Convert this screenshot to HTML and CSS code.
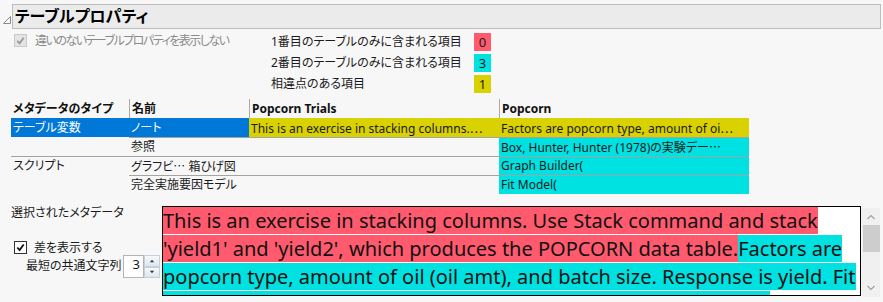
FILE: index.html
```html
<!DOCTYPE html>
<html>
<head>
    <title>テーブルプロパティ</title>
    <link rel="stylesheet" href="styles.css">
</head>
<body>
    <div class="outline">
        <svg class="disclosure" viewBox="0 0 10 10">
            <path d="M8.5 1.5 L8.5 8.5 L1.5 8.5 Z" fill="none" stroke="#8c8c8c" stroke-width="1"/>
        </svg>
        <div class="outline-title">テーブルプロパティ</div>
    </div>

    <div class="summary">
        <div class="check disabled">
            <span class="box">
                <svg viewBox="0 0 12 12"><path d="M2.5 6.5 L5 9 L9.5 3" fill="none" stroke="#9a9a9a" stroke-width="2"/></svg>
            </span>
            <span class="tight">違いのないテーブルプロパティを表示しない</span>
        </div>
        <div class="counts">
            <span>1番目のテーブルのみに含まれる項目</span><span class="badge red">0</span>
            <span>2番目のテーブルのみに含まれる項目</span><span class="badge cyan">3</span>
            <span>相違点のある項目</span><span class="badge yellow">1</span>
        </div>
    </div>

    <div class="meta-table">
        <div class="head">メタデータのタイプ</div>
        <div class="head sep">名前</div>
        <div class="head sep">Popcorn Trials</div>
        <div class="head sep">Popcorn</div>

        <div class="sel">テーブル変数</div>
        <div class="sel">ノート</div>
        <div class="yellow">This is an exercise in stacking columns.<span class="ell">…</span></div>
        <div class="yellow">Factors are popcorn type, amount of oi<span class="ell">…</span></div>

        <div></div>
        <div class="line">参照</div>
        <div class="line"></div>
        <div class="line cyan">Box, Hunter, Hunter (1978)の実験デー<span class="ell">…</span></div>

        <div class="line">スクリプト</div>
        <div class="line">グラフビ<span class="ell">…</span> 箱ひげ図</div>
        <div class="line"></div>
        <div class="line cyan">Graph Builder(</div>

        <div></div>
        <div class="line">完全実施要因モデル</div>
        <div class="line"></div>
        <div class="line cyan">Fit Model(</div>
    </div>

    <div class="detail">
        <div class="side">
            <div class="side-title">選択されたメタデータ</div>
            <div class="check diff-check">
                <span class="box on">
                    <svg viewBox="0 0 12 12"><path d="M2.5 6 L5 8.8 L9.5 2.8" fill="none" stroke="#111" stroke-width="2"/></svg>
                </span>
                差を表示する
            </div>
            <div class="common-row">
                <span class="common-label">最短の共通文字列</span>
                <span class="spin-value">3</span>
                <span class="spin-btns">
                    <span class="spin-btn">
                        <svg viewBox="0 0 7 4"><path d="M3.5 0.5 L6 3.5 L1 3.5 Z" fill="#333"/></svg>
                    </span>
                    <span class="spin-btn">
                        <svg viewBox="0 0 7 4"><path d="M1 0.5 L6 0.5 L3.5 3.5 Z" fill="#333"/></svg>
                    </span>
                </span>
            </div>
        </div>
        <div class="diff-box">
            <span class="hl-red">This is an exercise in stacking columns. Use Stack command and stack 'yield1' and 'yield2', which produces the POPCORN data table.</span><span class="hl-cyan">Factors are popcorn type, amount of oil (oil amt), and batch size. Response is yield. Fit Model is used to analyze the yield by popcorn, oil amt and batch.</span>
        </div>
        <div class="scrollbar">
            <svg class="arrow" viewBox="0 0 10 6"><path d="M1.5 5 L5 1.5 L8.5 5" fill="none" stroke="#a0a0a0" stroke-width="1.2"/></svg>
            <div class="thumb"></div>
            <div class="track"></div>
            <svg class="arrow" viewBox="0 0 10 6"><path d="M1.5 1 L5 4.5 L8.5 1" fill="none" stroke="#a0a0a0" stroke-width="1.2"/></svg>
        </div>
    </div>
</body>
</html>
```

FILE: styles.css
```css
body {
    margin: 0;
    background: #f7f7f7;
    font-family: "Noto Sans", "Noto Sans CJK JP", sans-serif;
    font-size: 12px;
    color: #1a1a1a;
    font-feature-settings: "palt";
}
.outline {
    display: flex;
    align-items: center;
    padding: 4px 2px 0 2px;
}
.disclosure {
    width: 10px;
    height: 10px;
    margin-top: 6px;
}
.outline-title {
    flex: 1;
    height: 23px;
    line-height: 23px;
    padding-left: 2px;
    border: 1px solid #bcbcbc;
    background: #ebebeb;
    font-size: 16px;
    font-weight: bold;
    color: #000;
}
.summary {
    display: flex;
    padding: 4px 0 0 14px;
}
.check {
    display: flex;
    align-items: center;
    gap: 8px;
    height: 14px;
}
.summary .check {
    width: 257px;
    align-self: flex-start;
}
.check.disabled {
    color: #8a8a8a;
}
.tight {
    letter-spacing: -1.5px;
}
.box {
    width: 11px;
    height: 11px;
    border: 1px solid #c9c9c9;
    background: #e4e4e4;
    display: flex;
}
.box svg {
    width: 11px;
    height: 11px;
}
.box.on {
    border-color: #333;
    background: white;
}
.counts {
    display: grid;
    grid-template-columns: 203px 17px;
    grid-auto-rows: 18px;
    row-gap: 3px;
    line-height: 18px;
}
.badge {
    text-align: center;
    font-size: 13px;
}
.red { background: #ff5a6e; }
.cyan { background: #00e1e1; }
.yellow { background: #d9d100; }
.meta-table {
    display: grid;
    grid-template-columns: 118px 120px 250px 250px;
    margin: 6px 0 0 11px;
}
.meta-table > div {
    height: 19px;
    line-height: 19px;
    padding-left: 2px;
    white-space: nowrap;
    overflow: hidden;
    box-sizing: border-box;
}
.meta-table .head {
    font-weight: bold;
    color: #111;
}
.meta-table .sep {
    border-left: 1px solid #a9a9a9;
}
.meta-table .sel {
    background: #0078d7;
    color: white;
}
.meta-table .line {
    border-top: 1px solid #a3a3a3;
    line-height: 18px;
}
.ell {
    font-family: "Noto Sans CJK JP", sans-serif;
}
.detail {
    display: flex;
    align-items: flex-start;
    margin-top: 10px;
}
.side {
    width: 162px;
    padding-left: 11px;
    box-sizing: border-box;
}
.side-title {
    line-height: 17px;
}
.diff-check {
    margin: 18px 0 0 3px;
    height: 16px;
    gap: 7px;
}
.common-row {
    display: flex;
    padding-left: 15px;
}
.common-label {
    width: 97px;
    padding-top: 1px;
}
.spin-value {
    width: 21px;
    height: 23px;
    box-sizing: border-box;
    border: 1px solid #b4b4b4;
    background: white;
    text-align: right;
    padding-right: 3px;
    line-height: 16px;
    font-size: 13px;
}
.spin-btns {
    display: flex;
    flex-direction: column;
    width: 16px;
    height: 23px;
}
.spin-btn {
    flex: 1;
    display: flex;
    align-items: center;
    justify-content: center;
    border: 1px solid #c6d0da;
    background: linear-gradient(#f6f9fc, #dfe6ee);
}
.spin-btn svg {
    width: 6px;
    height: 4px;
}
.diff-box {
    width: 697px;
    height: 88px;
    margin-top: 2px;
    border: 1px solid #000;
    background: white;
    overflow: hidden;
    font-size: 20px;
    line-height: 28px;
    color: #111;
}
.hl-red { background: #ff5a6e; }
.hl-cyan { background: #00e1e1; }
.scrollbar {
    width: 18px;
    height: 89px;
    margin: 4px 0 0 1px;
    background: #f0f0f0;
    display: flex;
    flex-direction: column;
    align-items: center;
}
.scrollbar .arrow {
    width: 10px;
    height: 6px;
    margin: 6px 0;
}
.scrollbar .thumb {
    width: 17px;
    height: 27px;
    margin-top: -1px;
    background: #cdcdcd;
}
.scrollbar .track {
    flex: 1;
}
```
